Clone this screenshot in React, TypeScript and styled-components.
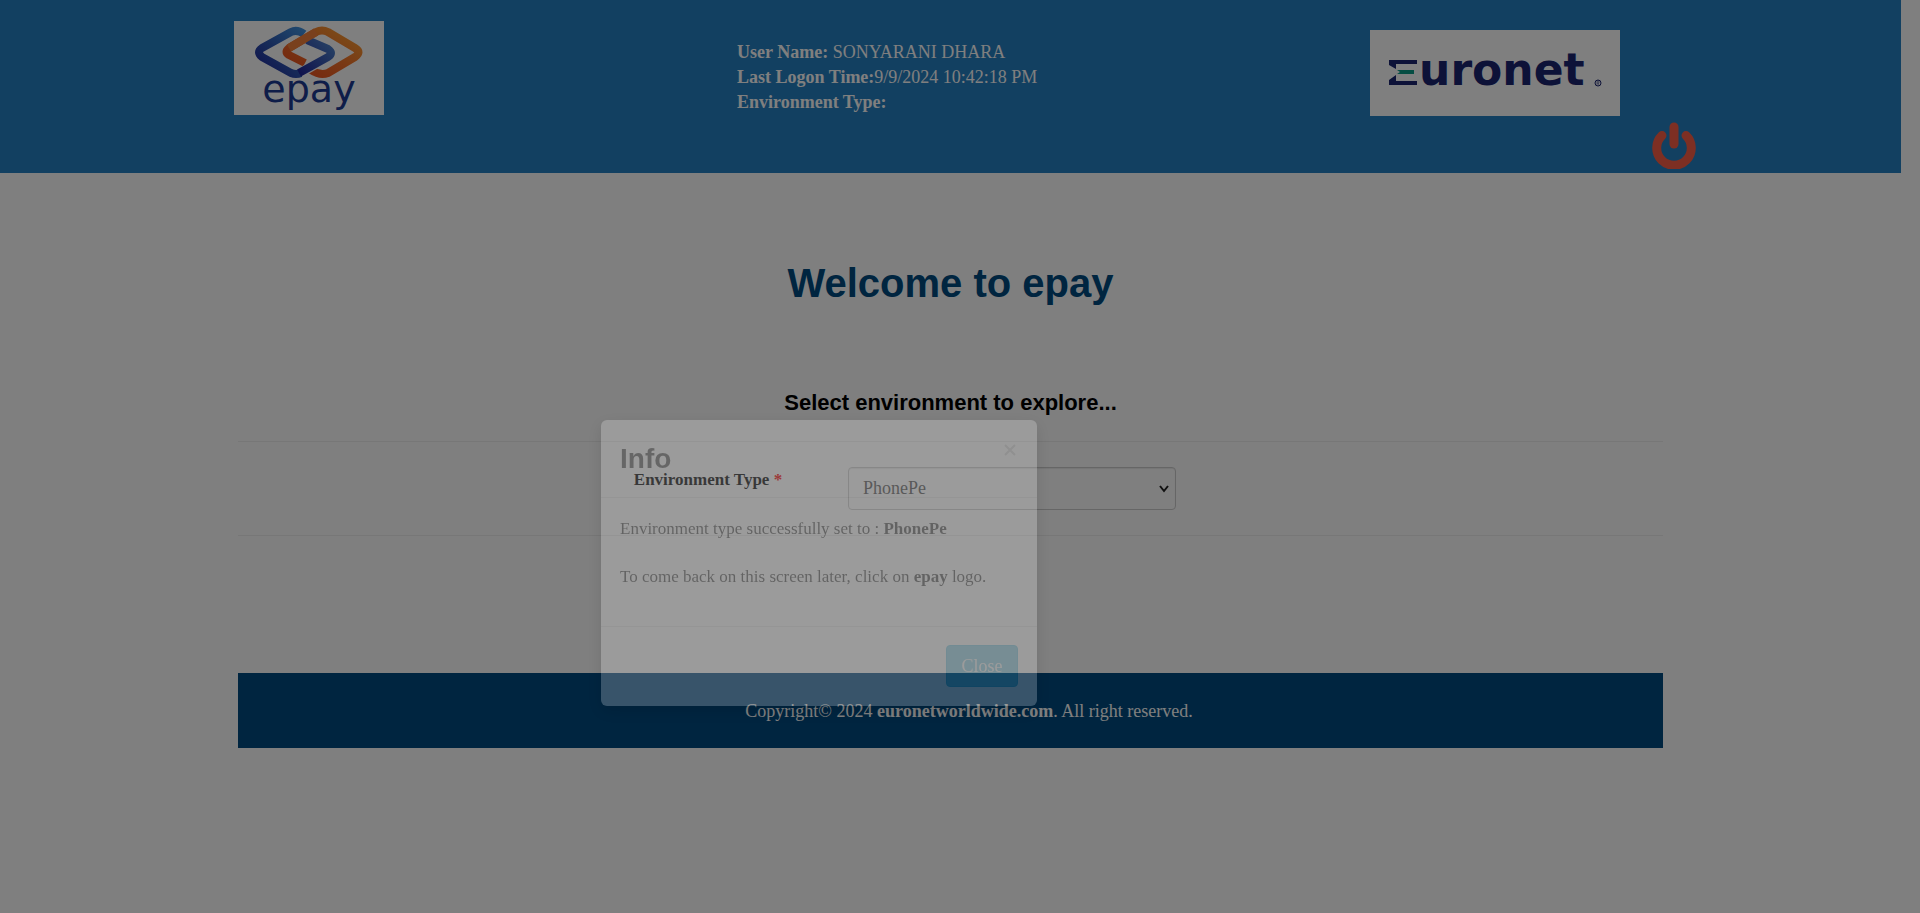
import React, { useState } from "react";
import styled, { createGlobalStyle } from "styled-components";

const serif = `"Liberation Serif", "Times New Roman", serif`;
const sans = `"Liberation Sans", Arial, sans-serif`;

const GlobalStyle = createGlobalStyle`
  *, *::before, *::after { box-sizing: border-box; }
  body {
    margin: 0;
    background: #fff;
    color: #000;
    font: 18px/25px ${serif};
  }
`;

const Page = styled.div`
  padding-right: 19px;
`;

const Header = styled.header`
  display: grid;
  grid-template-columns: 503fr 633fr 531fr;
  align-items: start;
  min-height: 173px;
  padding-left: 234px;
  background: #2480c2;
  color: #fff;
`;

const LogoLink = styled.a`
  display: block;
  width: 150px;
  height: 94px;
  margin-top: 21px;
`;

const UserInfo = styled.div`
  padding-top: 40px;
`;

const HeaderRight = styled.div`
  display: flex;
  align-items: flex-end;
  gap: 32px;
  height: 173px;
  padding-bottom: 4px;
`;

const EuronetLogo = styled.svg`
  flex: none;
  align-self: flex-start;
  margin-top: 30px;
`;

const PowerButton = styled.button`
  display: block;
  padding: 0;
  border: 0;
  background: none;
  line-height: 0;
  cursor: pointer;
`;

const Container = styled.main`
  width: 75%;
  margin: 0 auto;
`;

const Title = styled.h1`
  margin: 0;
  padding: 86px 0 72px;
  color: #004a80;
  font: bold 40px/48px ${sans};
  text-align: center;
`;

const Subtitle = styled.h2`
  margin: 0;
  padding: 10px 0 24px;
  font: bold 22px/28px ${sans};
  text-align: center;
`;

const FormRow = styled.form`
  display: grid;
  grid-template-columns: 396fr 214fr 328fr 487fr;
  height: 95px;
  border-top: 1px solid #eee;
  border-bottom: 1px solid #eee;
`;

const Label = styled.label`
  grid-column: 2;
  padding-top: 25px;
  font-size: 17px;
  font-weight: bold;
`;

const Required = styled.span`
  color: #f00;
`;

const SelectWrap = styled.div`
  position: relative;
  height: 43px;
  margin-top: 25px;
`;

const Select = styled.select`
  appearance: none;
  width: 100%;
  height: 43px;
  padding: 0 14px;
  border: 1px solid #ccc;
  border-radius: 4px;
  background: #fff;
  box-shadow: inset 0 1px 1px rgba(0, 0, 0, 0.08);
  color: #555;
  font: 18px/25px ${serif};
`;

const Chevron = styled.svg`
  position: absolute;
  top: 18px;
  right: 7px;
  pointer-events: none;
`;

const Footer = styled.footer`
  margin-top: 137px;
  padding: 26px 0 24px 37px;
  background: #004a80;
  color: #fff;
  text-align: center;
`;

const Backdrop = styled.div`
  position: fixed;
  inset: 0;
  background: rgba(0, 0, 0, 0.5);
`;

const Dialog = styled.div`
  position: fixed;
  top: 420px;
  left: 601px;
  width: 436px;
  border-radius: 6px;
  background: #fff;
  box-shadow: 0 5px 15px rgba(0, 0, 0, 0.5);
  opacity: 0.22;
  font-size: 17px;
  line-height: 24px;
`;

const DialogHeader = styled.div`
  display: flex;
  justify-content: space-between;
  align-items: flex-start;
  height: 78px;
  padding: 19px;
  border-bottom: 1px solid #e5e5e5;
`;

const DialogTitle = styled.h4`
  margin: 0;
  color: #111;
  font: bold 28px/40px ${sans};
`;

const DismissButton = styled.button`
  padding: 5px 2px;
  border: 0;
  background: none;
  line-height: 0;
  opacity: 0.2;
  cursor: pointer;
`;

const DialogBody = styled.div`
  display: grid;
  gap: 24px;
  height: 128px;
  padding: 19px;
  align-content: start;
`;

const Message = styled.p`
  margin: 0;
`;

const DialogFooter = styled.div`
  display: flex;
  justify-content: flex-end;
  padding: 18px 19px 19px;
  border-top: 1px solid #e5e5e5;
`;

const CloseButton = styled.button`
  width: 72px;
  height: 42px;
  padding: 0;
  border: 1px solid #46b8da;
  border-radius: 4px;
  background: #5bc0de;
  color: #fff;
  font: 18px/25px ${serif};
  cursor: pointer;
`;

function EpayMark() {
  return (
    <svg width="150" height="94" viewBox="0 0 150 94" role="img" aria-label="epay">
      <defs>
        <linearGradient id="blue" x1="0" y1="1" x2="1" y2="0">
          <stop offset="0" stopColor="#20259a" />
          <stop offset="0.45" stopColor="#2d55b0" />
          <stop offset="1" stopColor="#3f90dc" />
        </linearGradient>
        <linearGradient id="orange" x1="0" y1="1" x2="1" y2="0">
          <stop offset="0" stopColor="#e84a1c" />
          <stop offset="0.5" stopColor="#f2702a" />
          <stop offset="1" stopColor="#f9a233" />
        </linearGradient>
        <linearGradient id="indigo" x1="0" y1="1" x2="1" y2="0">
          <stop offset="0" stopColor="#20259a" />
          <stop offset="1" stopColor="#4f86cc" />
        </linearGradient>
      </defs>
      <rect width="150" height="94" fill="#fff" />
      <g fill="none" strokeWidth="8" strokeLinejoin="round">
        <path d="M70 13 Q63 8 57 11 L28 27 Q22 31 28 36 L57 52 Q62 54 67 52" stroke="url(#blue)" />
        <path d="M71 42 L55 34 Q50 31 55 27 L82 11 Q88 8 94 11 L121 27 Q128 31 121 36 L94 52 Q86 55 77 49" stroke="url(#orange)" />
        <path d="M73 19 L94 28 Q100 32 94 36 L66 52" stroke="#fff" strokeWidth="10" />
        <path d="M73 19 L94 28 Q100 32 94 36 L65 52" stroke="url(#indigo)" />
        <path d="M55 27 L82 11" stroke="#f2803a" />
      </g>
      <text x="75" y="81" textAnchor="middle" fill="#1c3a92" fontFamily="DejaVu Sans, sans-serif" fontSize="38">
        epay
      </text>
    </svg>
  );
}

function EuronetMark() {
  return (
    <EuronetLogo width="250" height="86" viewBox="0 0 250 86" role="img" aria-label="Euronet">
      <rect width="250" height="86" fill="#fff" />
      <text x="19" y="55" fill="#1a2470" fontFamily="DejaVu Sans, sans-serif" fontWeight="bold" fontSize="44">
        Euronet
      </text>
      <rect x="15" y="20" width="35" height="38" fill="#fff" />
      <path d="M19 30 H47 V34 H26 V39 L19 35 Z M19 55 V50 L26 45 V51 H47 V55 Z" fill="#1a2470" />
      <path d="M27 40 H44 V44 H27 L30 42 Z" fill="#0a9a86" />
      <circle cx="228" cy="53" r="3" fill="none" stroke="#1a2470" />
      <path d="M227 55 V51 H229 V53 H227 M228 53 L229 55" fill="none" stroke="#1a2470" strokeWidth="0.500" />
    </EuronetLogo>
  );
}

export default function App() {
  const [open, setOpen] = useState(true);
  const close = () => setOpen(false);
  return (
    <>
      <GlobalStyle />
      <Page>
        <Header>
          <LogoLink href="#"><EpayMark /></LogoLink>
          <UserInfo>
            <div><b>User Name:</b> SONYARANI DHARA</div>
            <div><b>Last Logon Time:</b>9/9/2024 10:42:18 PM</div>
            <div><b>Environment Type:</b></div>
          </UserInfo>
          <HeaderRight>
            <EuronetMark />
            <PowerButton type="button" aria-label="Log out">
              <svg width="44" height="47" viewBox="0 0 44 47" fill="none" stroke="#fb5f46" strokeWidth="9" strokeLinecap="round">
                <path d="M22 5 V22" />
                <path d="M10 13.500 A17.300 17.300 0 1 0 34 13.500" />
              </svg>
            </PowerButton>
          </HeaderRight>
        </Header>
        <Container>
          <Title>Welcome to epay</Title>
          <Subtitle>Select environment to explore...</Subtitle>
          <FormRow>
            <Label htmlFor="environment">Environment Type <Required>*</Required></Label>
            <SelectWrap>
              <Select id="environment" defaultValue="PhonePe">
                <option>PhonePe</option>
              </Select>
              <Chevron width="10" height="8" viewBox="0 0 10 8" fill="none" stroke="#222" strokeWidth="2">
                <path d="M1 1 L5 6 L9 1" />
              </Chevron>
            </SelectWrap>
          </FormRow>
          <Footer>Copyright© 2024 <b>euronetworldwide.com</b>. All right reserved.</Footer>
        </Container>
      </Page>
      {open && (
        <>
          <Backdrop />
          <Dialog role="dialog" aria-labelledby="dialog-title">
            <DialogHeader>
              <DialogTitle id="dialog-title">Info</DialogTitle>
              <DismissButton type="button" aria-label="Dismiss" onClick={close}>
                <svg width="12" height="12" viewBox="0 0 12 12" stroke="#000" strokeWidth="2">
                  <path d="M1 1 L11 11 M11 1 L1 11" />
                </svg>
              </DismissButton>
            </DialogHeader>
            <DialogBody>
              <Message>Environment type successfully set to : <b>PhonePe</b></Message>
              <Message>To come back on this screen later, click on <b>epay</b> logo.</Message>
            </DialogBody>
            <DialogFooter>
              <CloseButton type="button" onClick={close}>Close</CloseButton>
            </DialogFooter>
          </Dialog>
        </>
      )}
    </>
  );
}
